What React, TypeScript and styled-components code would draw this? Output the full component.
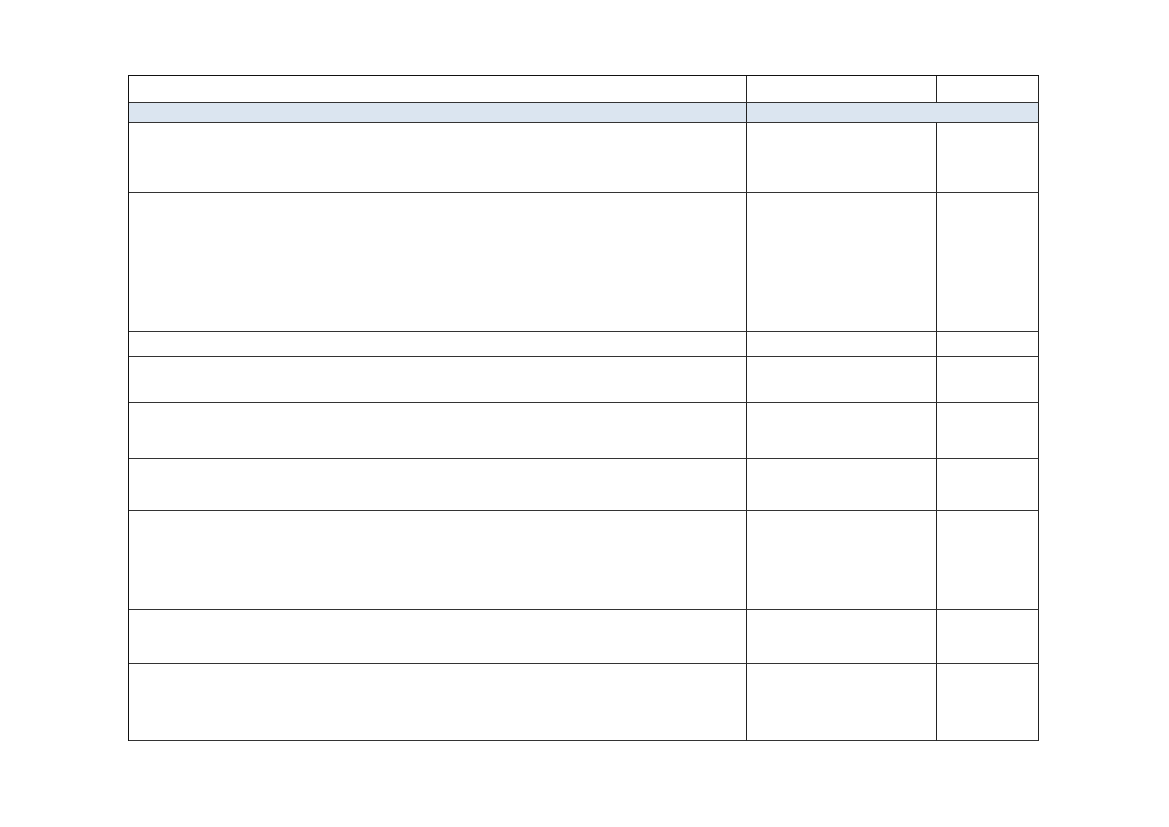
import React from "react";
import styled, { createGlobalStyle } from "styled-components";

const Global = createGlobalStyle`
  html, body { margin: 0; padding: 0; background: #ffffff; }
  body { font-family: "Liberation Sans", Arial, sans-serif; }
`;

const Page = styled.div`
  width: 1169px;
  height: 827px;
  box-sizing: border-box;
  padding: 75px 0 0 128px;
  background: #fff;
`;

const Table = styled.div`
  display: grid;
  grid-template-columns: 618px 190px 102px;
  width: 911px;
  box-sizing: border-box;
  border-left: 1px solid #111;
  border-top: 1px solid #111;
`;

const Cell = styled.div<{ $h: number; $span?: number; $shade?: boolean }>`
  box-sizing: border-box;
  height: ${(p) => p.$h}px;
  grid-column: span ${(p) => p.$span ?? 1};
  border-right: 1px solid #222;
  border-bottom: 1px solid #333;
  background: ${(p) => (p.$shade ? "#dbe5f0" : "#fff")};
  font-size: 13px;
  color: #000;
`;

const rows = [70, 139, 25, 46, 56, 52, 99, 54, 77];

export default function App() {
  return (
    <>
      <Global />
      <Page>
        <Table>
          <Cell $h={27} />
          <Cell $h={27} />
          <Cell $h={27} />
          <Cell $h={20} $shade />
          <Cell $h={20} $span={2} $shade />
          {rows.map((h, i) => (
            <React.Fragment key={i}>
              <Cell $h={h} />
              <Cell $h={h} />
              <Cell $h={h} />
            </React.Fragment>
          ))}
        </Table>
      </Page>
    </>
  );
}
